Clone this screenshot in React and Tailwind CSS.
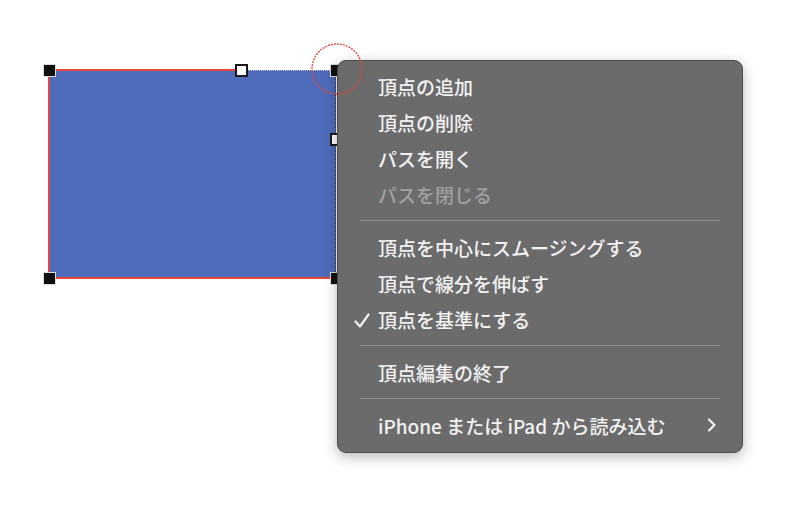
import React from "react";

const font = { fontFamily: '"Noto Sans CJK JP", "Noto Sans", sans-serif' };

function Item({ children, disabled, checked, submenu }) {
  return (
    <div className={"relative flex h-[36px] items-center pl-[40px] pr-[25px] text-[19px] font-medium leading-none " + (disabled ? "text-[#a0a0a0]" : "text-[#f1f1f1]")}>
      {checked && (
        <svg className="absolute left-[16px] top-[12px]" width="16" height="16" viewBox="0 0 16 16">
          <path d="M1.5 8.5 L6 13.5 L14.5 1.5" fill="none" stroke="#f1f1f1" strokeWidth="2.2" strokeLinecap="round" strokeLinejoin="round" />
        </svg>
      )}
      <span className="flex-1">{children}</span>
      {submenu && (
        <svg width="10" height="16" viewBox="0 0 10 16">
          <path d="M2 2.5 L7.5 8 L2 13.5" fill="none" stroke="#f1f1f1" strokeWidth="2.2" strokeLinecap="round" strokeLinejoin="round" />
        </svg>
      )}
    </div>
  );
}

function Sep() {
  return <div className="mx-[22px] my-2 h-px bg-[#8c8c8c]" />;
}

export default function App() {
  return (
    <div className="relative h-[517px] w-[800px] overflow-hidden bg-white" style={font}>
      {/* shape */}
      <div className="absolute left-[49px] top-[70px] h-[208px] w-[287px] bg-[#4e6cba]">
        <div className="absolute left-0 top-[-1px] h-[2px] w-[192px] bg-[#e8473b]" />
        <div className="absolute left-[192px] top-0 h-0 w-[95px] border-t border-dotted border-[#b8c0d0]" />
        <div className="absolute left-[-1px] top-0 h-[208px] w-[2px] bg-[#e8473b]" />
        <div className="absolute bottom-[-1px] left-0 h-[2px] w-[287px] bg-[#e8473b]" />
        <div className="absolute right-0 top-0 h-[208px] w-0 border-r border-dotted border-[#2c3a66]" />
      </div>
      {/* handles */}
      <div className="absolute left-[44px] top-[65px] h-[11px] w-[11px] bg-[#111] outline outline-1 outline-[#ddd]" />
      <div className="absolute left-[44px] top-[273px] h-[11px] w-[11px] bg-[#111] outline outline-1 outline-[#ddd]" />
      <div className="absolute left-[331px] top-[65px] h-[11px] w-[11px] bg-[#111] outline outline-1 outline-[#ddd]" />
      <div className="absolute left-[331px] top-[273px] h-[11px] w-[11px] bg-[#111] outline outline-1 outline-[#ddd]" />
      <div className="absolute left-[235px] top-[64px] h-[13px] w-[13px] border-2 border-[#1a1a1a] bg-white" />
      <div className="absolute left-[330px] top-[133px] h-[13px] w-[13px] border-2 border-[#1a1a1a] bg-white" />

      {/* menu */}
      <div className="absolute left-[337px] top-[60px] w-[406px] rounded-[9px] border border-[#4c4c4c] bg-[#6b6b6b] pb-[9px] pt-[7px] shadow-[0_4px_14px_rgba(0,0,0,0.28)]">
        <Item>頂点の追加</Item>
        <Item>頂点の削除</Item>
        <Item>パスを開く</Item>
        <Item disabled>パスを閉じる</Item>
        <Sep />
        <Item>頂点を中心にスムージングする</Item>
        <Item>頂点で線分を伸ばす</Item>
        <Item checked>頂点を基準にする</Item>
        <Sep />
        <Item>頂点編集の終了</Item>
        <Sep />
        <Item submenu>iPhone または iPad から読み込む</Item>
      </div>

      {/* dotted circle */}
      <svg className="absolute left-[310px] top-[42px]" width="54" height="54" viewBox="0 0 54 54">
        <circle cx="27" cy="27" r="25" fill="none" stroke="#e0463b" strokeWidth="1.3" strokeDasharray="2 1" />
      </svg>
    </div>
  );
}
